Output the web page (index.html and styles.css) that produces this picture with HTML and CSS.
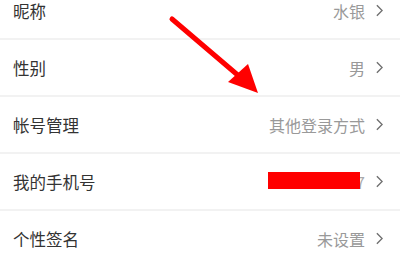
FILE: index.html
```html
<!DOCTYPE html>
<html lang="zh">
<head>
<meta charset="utf-8">
<link rel="stylesheet" href="styles.css">
</head>
<body>
<div class="list">
  <div class="row"><span class="label">昵称</span><span class="value">水银</span><svg class="chev" viewBox="0 0 8 14"><path d="M1 1 L7 7 L1 13"/></svg></div>
  <div class="row"><span class="label">性别</span><span class="value">男</span><svg class="chev" viewBox="0 0 8 14"><path d="M1 1 L7 7 L1 13"/></svg></div>
  <div class="row"><span class="label">帐号管理</span><span class="value">其他登录方式</span><svg class="chev" viewBox="0 0 8 14"><path d="M1 1 L7 7 L1 13"/></svg></div>
  <div class="row"><span class="label">我的手机号</span><span class="value phone"><span class="redact"></span>7</span><svg class="chev" viewBox="0 0 8 14"><path d="M1 1 L7 7 L1 13"/></svg></div>
  <div class="row"><span class="label">个性签名</span><span class="value">未设置</span><svg class="chev" viewBox="0 0 8 14"><path d="M1 1 L7 7 L1 13"/></svg></div>
</div>
<svg class="arrow" viewBox="0 0 400 266" width="400" height="266">
  <line x1="172" y1="19" x2="240" y2="77" stroke="#ff0000" stroke-width="5" stroke-linecap="round"/>
  <polygon points="258,93 228,82 248,64" fill="#ff0000"/>
</svg>
</body>
</html>
```
FILE: styles.css
```css
html, body {
  margin: 0;
  padding: 0;
  background: #ffffff;
  overflow: hidden;
}
body {
  width: 400px;
  height: 266px;
  position: relative;
  font-family: "Noto Sans CJK SC", "Noto Sans", sans-serif;
}
.list {
  margin-top: -17px;
}
.row {
  height: 55px;
  border-bottom: 2px solid #f2f2f2;
  display: flex;
  align-items: center;
  padding: 0 17px 0 13px;
}
.label {
  font-size: 16.5px;
  color: #333333;
  flex: 1;
}
.value {
  font-size: 16px;
  color: #999999;
  margin-right: 11px;
  display: flex;
  align-items: center;
}
.phone {
  color: #aaaaaa;
}
.redact {
  display: inline-block;
  width: 92px;
  height: 17px;
  background: #ff0000;
  margin-right: -4px;
  margin-top: -2px;
  position: relative;
  z-index: 1;
}
.chev {
  width: 7px;
  height: 13px;
  fill: none;
  stroke: #6f6f6f;
  stroke-width: 1.6;
}
.arrow {
  position: absolute;
  left: 0;
  top: 0;
}
```
